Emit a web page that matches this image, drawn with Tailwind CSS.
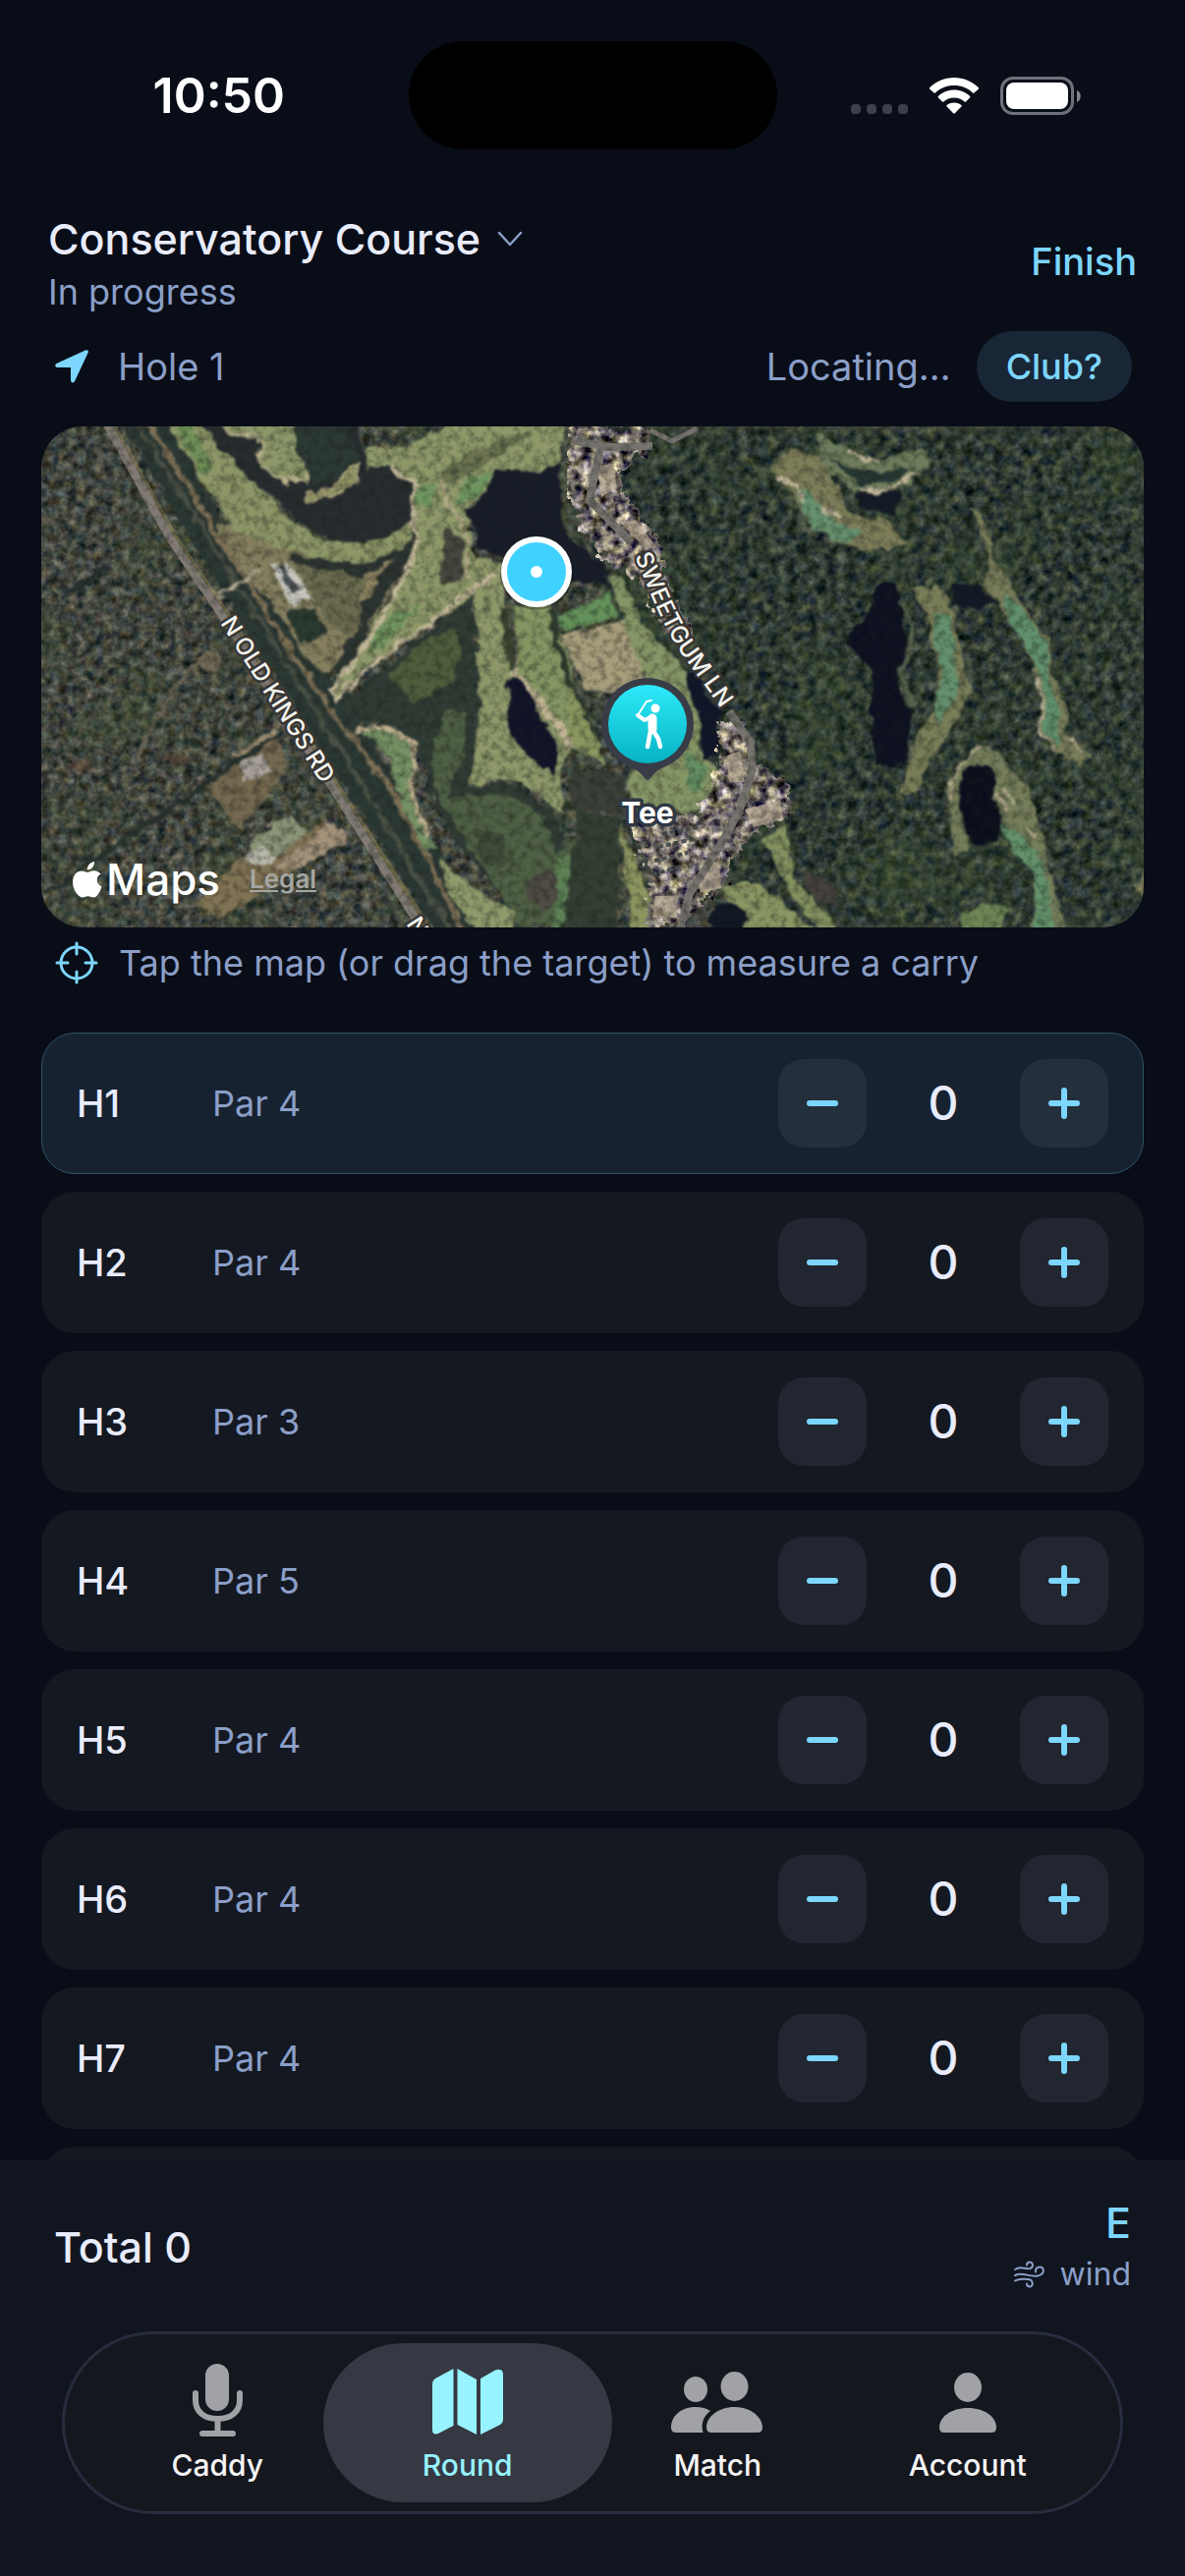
<!DOCTYPE html>
<html lang="en">
<head>
    <meta charset="UTF-8">
    <meta name="viewport" content="width=device-width, initial-scale=1.0">
    <title>Conservatory Course - Round</title>
    <script src="https://cdn.jsdelivr.net/npm/@tailwindcss/browser@4"></script>
</head>
<body class="bg-[#090d17] font-['Inter','Liberation_Sans',sans-serif] text-[#e9ecfc]">
<div class="flex h-screen flex-col overflow-hidden">

    <!-- Status bar -->
    <div class="grid shrink-0 grid-cols-[1fr_375px_1fr] items-center pt-[42px]">
        <div class="pl-[30px] text-center text-[50px] leading-[60px] font-semibold text-white">10:50</div>
        <div class="h-[110px] rounded-full bg-black"></div>
        <div class="flex items-center justify-end gap-[22px] pr-[106px]">
            <svg class="h-10 w-[58px]" viewBox="0 0 58 40" fill="#3d404b">
                <rect x="0" y="29" width="10" height="10" rx="4"/><rect x="16" y="29" width="10" height="10" rx="4"/><rect x="32" y="29" width="10" height="10" rx="4"/><rect x="48" y="29" width="10" height="10" rx="4"/>
            </svg>
            <svg class="h-10 w-[50px]" viewBox="0 0 50 40" fill="#fff">
                <path d="M25 2C15.500 2 6.500 5.800 0 12.200Q-.5 13 .2 13.700L4.600 17.600Q5.300 18 6 17.500C11 12.600 17.500 10 25 10S39 12.600 44 17.500Q44.700 18 45.400 17.600L49.800 13.700Q50.500 13 50 12.200C43.500 5.800 34.500 2 25 2Z"/>
                <path d="M25 14.500C18.500 14.500 13 17 8.800 21Q8.300 21.800 9 22.500L13 26.500Q13.700 27 14.400 26.500C17.300 23.800 20.800 22.500 25 22.500S32.700 23.800 35.600 26.500Q36.300 27 37 26.500L41 22.500Q41.700 21.800 41.200 21C37 17 31.500 14.500 25 14.500Z"/>
                <path d="M25 27.500C21.800 27.500 19.300 28.500 17.500 30.200Q17 30.900 17.600 31.500L24.200 38.300Q25 39 25.800 38.300L32.400 31.500Q33 30.900 32.500 30.200C30.700 28.500 28.200 27.500 25 27.500Z"/>
            </svg>
            <svg class="h-10 w-[82px]" viewBox="0 0 82 40">
                <rect x="1.500" y="2.500" width="72" height="36" rx="11.500" fill="none" stroke="#6f727a" stroke-width="3"/>
                <rect x="6" y="7" width="63" height="27" rx="8" fill="#fff"/>
                <path d="M78 15C83 17 83 25 78 27Z" fill="#85878d"/>
            </svg>
        </div>
    </div>

    <!-- Course header -->
    <header class="flex shrink-0 items-center justify-between px-[49px] pt-[60px]">
        <div>
            <button class="flex items-center gap-[17px] text-[43px] leading-[62px] font-medium">
                Conservatory Course
                <svg class="h-[26px] w-[26px]" viewBox="0 0 26 26" fill="none" stroke="#8b9fc8" stroke-width="2.500" stroke-linecap="round" stroke-linejoin="round"><path d="M2 7l11 12 11-12"/></svg>
            </button>
            <p class="text-[36px] leading-[46px] text-[#8b9fc8]">In progress</p>
        </div>
        <button class="text-[38px] leading-[48px] font-medium text-[#7dd6fd]">Finish</button>
    </header>

    <!-- Current hole -->
    <div class="flex shrink-0 items-center pt-[17px] pr-[54px] pl-[56px] text-[38px] leading-[48px] text-[#8b9fc8]">
        <svg class="mr-[30px] h-[34px] w-[34px]" viewBox="0 0 34 34" fill="#7dd6fd"><path d="M31.500.3L2 13.700C-.8 15 0 18 2.800 18H15.400Q16 18 16 18.700V31C16 33.800 19 34.400 20.200 31.800L33.700 2.700C34.300 1 33 -.3 31.500.3Z"/></svg>
        <span>Hole 1</span>
        <span class="ml-auto">Locating…</span>
        <button class="ml-[26px] rounded-full bg-[#192635] px-[30px] py-3 text-[36px] font-medium text-[#7dd6fd]">Club?</button>
    </div>

    <!-- Satellite map -->
    <div class="relative mx-[42px] mt-[25px] h-[510px] shrink-0 overflow-hidden rounded-[42px]">
        <svg class="absolute inset-0 h-full w-full" viewBox="0 0 1122 510" preserveAspectRatio="xMidYMid slice" role="img" aria-label="Satellite map of hole 1">
            <defs>
                <filter id="canopy" x="0" y="0" width="100%" height="100%" color-interpolation-filters="sRGB">
                    <feTurbulence type="fractalNoise" baseFrequency=".11" numOctaves="5" seed="4"/>
                    <feColorMatrix values=".55 .25 0 0 -.125  .55 .1 0 0 -.035  .45 0 .15 0 -.04  0 0 0 0 1"/>
                    <feComposite in2="SourceAlpha" operator="in"/>
                </filter>
                <filter id="canopyEast" x="0" y="0" width="100%" height="100%" color-interpolation-filters="sRGB">
                    <feTurbulence type="fractalNoise" baseFrequency=".1" numOctaves="5" seed="9"/>
                    <feColorMatrix values=".5 .2 0 0 -.155  .5 .15 0 0 -.085  .4 0 .15 0 -.065  0 0 0 0 1" result="n"/>
                    <feGaussianBlur in="SourceAlpha" stdDeviation="5" result="a"/>
                    <feComposite in="n" in2="a" operator="in"/>
                </filter>
                <filter id="glades" x="0" y="0" width="100%" height="100%" color-interpolation-filters="sRGB">
                    <feTurbulence type="fractalNoise" baseFrequency=".012" numOctaves="3" seed="31"/>
                    <feColorMatrix values="0 0 0 0 .27  0 0 0 0 .36  0 0 0 0 .2  2.400 0 0 0 -1.100"/>
                </filter>
                <filter id="houses" x="0" y="0" width="100%" height="100%" color-interpolation-filters="sRGB">
                    <feTurbulence type="fractalNoise" baseFrequency=".1" numOctaves="4" seed="12" result="t"/>
                    <feColorMatrix values="1.700 .2 0 0 -.44  1.650 .2 0 0 -.45  1.350 0 .3 0 -.37  0 0 0 0 1" result="n"/>
                    <feDisplacementMap in="SourceAlpha" in2="t" scale="24" xChannelSelector="R" yChannelSelector="G" result="s"/>
                    <feComposite in="n" in2="s" operator="in"/>
                </filter>
                <filter id="ragged" x="-5%" y="-5%" width="110%" height="110%" color-interpolation-filters="sRGB">
                    <feTurbulence type="fractalNoise" baseFrequency=".07" numOctaves="3" seed="3"/>
                    <feDisplacementMap in="SourceGraphic" scale="12" xChannelSelector="R" yChannelSelector="G"/>
                    <feGaussianBlur stdDeviation="1"/>
                </filter>
                <filter id="grain" x="0" y="0" width="100%" height="100%" color-interpolation-filters="sRGB">
                    <feTurbulence type="fractalNoise" baseFrequency=".12" numOctaves="4" seed="21"/>
                    <feColorMatrix values="0 0 0 0 .1  0 0 0 0 .12  0 0 0 0 .1  1 0 0 0 -.4"/>
                </filter>
                <linearGradient id="teeFill" x1="0" y1="0" x2="0" y2="1"><stop offset="0" stop-color="#2deafa"/><stop offset="1" stop-color="#06b3c3"/></linearGradient>
                <path id="kingsRd" d="M182 200L318 416"/>
                <path id="kingsRd2" d="M371 506L440 615"/>
                <path id="sweetgumLn" d="M604 132C620 170 630 198 650 229C672 260 694 288 716 326"/>
            </defs>

            <rect width="1122" height="510" fill="#434a40" filter="url(#canopy)"/>
            <path d="M560 0H1122V510H720L640 330L560 130Z" fill="#000" filter="url(#canopyEast)"/>
            <rect width="1122" height="510" filter="url(#glades)" opacity=".45"/>

            <g filter="url(#ragged)">
                <!-- west side -->
                <g transform="translate(-12 -14) scale(.3827)">
                    <path d="M240 20L360 20L520 300L700 560L860 800L1240 1400L1090 1400L860 1030L540 520Z" fill="#2b3834"/>
                    <path d="M290 30L560 470L860 950L1130 1390" fill="none" stroke="#4b5145" stroke-width="14"/>
                    <path d="M500 290L600 330L900 430L990 390L960 480L880 600L790 700L760 690L640 500L540 400Z" fill="#857f5f"/>
                    <path d="M700 380L900 430L930 400L880 600L800 560L740 470Z" fill="#5c5e45" opacity=".6"/>
                    <path d="M680 530L760 520L790 590L720 610Z" fill="#2a3a30"/>
                    <path d="M690 375L870 400L1020 310L1020 370L900 560L880 640L830 700L800 690L880 560L890 440L700 400Z" fill="#2c3431"/>
                    <path d="M890 440L975 385L930 440L880 520Z" fill="#8e8463"/>
                    <path d="M635 405L690 400L745 490L700 515Z" fill="#c6c5bd"/><path d="M660 405L675 400L715 475L700 480Z" fill="#4d5357"/>
                    <path d="M360 20L480 30C540 120 640 250 740 320C820 370 930 350 1020 285L1010 340C950 390 880 410 830 395C740 380 600 340 540 310C480 200 430 140 360 20Z" fill="#8d9667"/>
                    <path d="M380 20L430 30L490 150L450 150Z" fill="#6f9058"/>
                    <path d="M450 20L870 20L900 140L960 140L1020 190L1015 285C960 330 900 350 860 350C780 345 720 300 690 260C600 190 540 140 450 20Z" fill="#272d2f"/>
                    <path d="M500 20L700 20L740 130L740 185L650 175L608 125L618 72L530 55Z" fill="#8d9769" stroke="#b9b18c" stroke-width="8"/>
                    <path d="M700 20L830 30L870 110L840 180L760 185L710 110Z" fill="#2c3934"/>
                    <path d="M735 235Q720 215 770 210L830 185L850 140L870 140L865 190L830 215Z" fill="#8d9263" stroke="#b3a780" stroke-width="6"/>
                    <path d="M900 90L1010 84L1130 20H1420L1410 140L1350 156L1250 148L1200 235L1170 245L1170 310L1180 390L1260 400L1265 560L1290 690L1440 880L1410 960L1420 1070L1290 970L1165 995L1200 800L1185 500L1090 540L1000 610L880 680L820 760L798 745L890 620L910 560L980 460L1025 340L1022 190L960 140L900 150Z" fill="#8e9869"/>
                    <path d="M1100 150L1250 70L1340 50L1200 150L1110 190Z" fill="#6b7350"/>
                    <path d="M1170 170L1230 160L1200 220L1130 240Z" fill="#6f9660"/>
                    <path d="M1100 310L1150 330L1155 440L1095 460Z" fill="#46473e"/>
                    <path d="M920 560L1040 510L960 600L900 650Z" fill="#71955f"/>
                    <path d="M1020 190L1080 190L1070 250L1030 240Z" fill="#6f9660"/>
                    <path d="M1285 510L1380 510L1430 640L1470 830L1540 940L1440 890L1300 690Z" fill="#869663"/>
                    <path d="M960 140L1022 185L1020 290L1030 350L980 470L910 590L805 745L815 765L870 700L1000 610L1090 540L1180 465L1250 425" fill="none" stroke="#c0b596" stroke-width="13"/>
                    <path d="M1100 170L1110 240L1160 310L1165 450" fill="none" stroke="#b3a786" stroke-width="8"/>
                    <path d="M1285 680L1420 850L1440 890" fill="none" stroke="#c2b494" stroke-width="24"/>
                    <path d="M1240 148L1350 156L1412 130L1412 250L1440 350L1540 415L1520 455L1460 455L1400 390L1250 380L1205 365L1160 260L1205 235Z" fill="#171c29"/>
                    <path d="M820 770L950 680L1180 480L1195 800L1165 1000L1290 985L1410 1080L1440 1300L1300 1330L1120 1130L1020 870L940 820L860 820Z" fill="#2f3b34"/>
                    <path d="M1260 520L1280 680" fill="none" stroke="#38422f" stroke-width="20"/>
                    <path d="M1270 710Q1300 690 1320 730L1370 820L1405 895L1395 962L1340 920L1278 865Z" fill="#101328"/>
                    <path d="M950 700L1060 600L1130 570L1150 640L1120 720L1020 770Z" fill="#505e3c"/>
                    <path d="M1100 790L1165 800L1150 940L1110 1020L1180 1020L1280 1010L1370 1080L1400 1180L1450 1130L1490 1200L1480 1380L1300 1360L1190 1180L1100 1050L1065 930Z" fill="#4f6044"/>
                    <path d="M1180 1110L1260 1120L1270 1210L1210 1200Z" fill="#3e4b39"/>
                    <ellipse cx="1370" cy="1270" rx="42" ry="52" fill="#4f4c44"/>
                    <path d="M1400 1190L1470 1180L1480 1380L1400 1380Z" fill="#5d8155"/>
                    <path d="M880 850L940 832L1022 880L1018 1020L1085 1160L1045 1160L985 1040L960 920Z" fill="#769265"/>
                    <path d="M860 845L940 830L1022 880L1015 1020L1060 1120" fill="none" stroke="#bfb08f" stroke-width="12"/>
                    <path d="M1095 1180L1160 1250L1290 1330L1290 1390L1190 1390L1110 1270Z" fill="#8f9a6b"/>
                    <path d="M1400 545L1545 475L1560 545L1415 580Z" fill="#649159"/>
                    <path d="M1410 590L1600 550L1640 740L1480 740Z" fill="#a89e7c"/>
                    <path d="M1385 530L1430 700L1500 860" fill="none" stroke="#2d3a2e" stroke-width="16"/>
                    <!-- homesteads below the road -->
                    <path d="M470 990L650 850L690 940L560 1110Z" fill="#75694f"/>
                    <path d="M560 930L620 900L640 950L570 985Z" fill="#a8a19a"/>
                    <path d="M440 1310L560 1180L790 1090L850 1130L620 1270L500 1350Z" fill="#807254"/>
                    <path d="M580 1150L690 1070L740 1110L640 1200Z" fill="#8c9577"/>
                    <path d="M560 1180L620 1150L660 1190L600 1210Z" fill="#b9b8ac"/>
                    <path d="M640 1220L800 1090L850 1130L720 1210Z" fill="#a3917a"/>
                    <path d="M40 1280L340 1080L660 850" fill="none" stroke="#27322e" stroke-width="14"/>
                    <path d="M540 920L660 840" stroke="#9b8c70" stroke-width="12"/>
                    <path d="M270 950L380 740L470 640" fill="none" stroke="#6b6455" stroke-width="10"/>
                    <ellipse cx="480" cy="660" rx="34" ry="28" fill="#756b58"/>
                    <path d="M90 910L200 760" stroke="#57574b" stroke-width="10"/>
                    <path d="M100 480L210 410" stroke="#252f2f" stroke-width="14"/>
                    <path d="M100 950L160 940M360 910L420 930" stroke="#6a513d" stroke-width="30" opacity=".6"/>
                    <!-- rail line -->
                    <path d="M320 30L480 290L610 500L800 790L960 1000L1150 1370" fill="none" stroke="#7d7056" stroke-width="15"/>
                    <path d="M490 490L620 420" stroke="#b3aa92" stroke-width="10"/>
                </g>
                <!-- east side -->
                <g transform="translate(538 -14) scale(.3992 .3827)">
                    <path d="M100 430L130 430L190 560L290 690L330 800L330 900L390 960L340 1060L150 1060L150 960L250 900L200 720L150 600Z" fill="#869566"/>
                    <path d="M290 900L350 940L340 1000L310 1010Z" fill="#648f62"/>
                    <path d="M0 720L60 860L100 940L40 900L0 860Z" fill="#8b975f"/>
                    <path d="M130 1090L170 1200L210 1300L200 1390L160 1390Z" fill="#8b955f"/>
                    <path d="M20 1060L130 1070L120 1390L-20 1390Z" fill="#343f33"/>
                    <path d="M0 940L140 960L140 1060L0 1060Z" fill="#3c4039"/>
                    <path d="M0 330L90 410L100 455L0 450Z" fill="#171c29"/>
                    <path d="M290 690L330 680L340 740L385 800L380 915L340 920L330 790Z" fill="#10152a"/>
                    <path d="M390 1260L480 1250L640 1390H440Z" fill="#8b9663"/>
                    <path d="M490 1130L550 1100L570 1230L700 1390L640 1390L560 1270Z" fill="#849260"/>
                    <ellipse cx="405" cy="1350" rx="48" ry="46" fill="#101723"/>
                    <path d="M510 150L570 90L640 120L680 190L720 270L810 290L860 350L770 370L700 350L620 310L580 240Z" fill="#7d7d59"/>
                    <path d="M570 200L620 220L680 290L740 320L710 350L620 310Z" fill="#66906e"/>
                    <path d="M630 50L700 90L790 130L890 90L925 130L870 190L800 215L730 205L640 140Z" fill="#6f7d5c"/>
                    <path d="M660 120L740 155L870 150L850 175L740 195Z" fill="#263632"/>
                    <path d="M520 175L570 190L600 240M640 255L690 280M700 100L790 130M740 205L800 210L890 165" fill="none" stroke="#c2b79a" stroke-width="11"/>
                    <path d="M725 215L850 210L820 275L740 255Z" fill="#131926"/>
                    <path d="M780 465Q830 430 838 480L860 650L835 720L872 800L850 935L785 940L765 780L775 690L705 610L720 570L760 550Z" fill="#0c1020"/>
                    <path d="M845 500L875 570L845 700L880 790" fill="none" stroke="#55604a" stroke-width="14"/>
                    <path d="M870 460L940 455L970 500L1000 640L1020 740L960 860L900 960L880 1015L845 1010L870 900L930 780L940 680L910 540Z" fill="#7a7e58"/>
                    <path d="M920 540L965 530L985 650L985 760L940 830L925 780L950 700Z" fill="#64906d"/>
                    <path d="M980 460L1040 450L1085 505L1040 525L975 510Z" fill="#111826"/>
                    <path d="M1020 250L1060 290L1085 400L1130 460L1190 570L1220 600L1230 710L1270 790L1265 860L1330 910L1300 935L1240 900L1195 850L1200 760L1180 660L1130 570L1060 460L1075 400Z" fill="#797c59"/>
                    <path d="M1100 480L1150 520L1215 610L1225 720L1250 800L1250 890L1205 850L1210 740L1180 650L1120 560Z" fill="#61906d"/>
                    <path d="M1190 700L1205 770L1195 850L1240 900M1270 870L1300 900" fill="none" stroke="#b5ad93" stroke-width="8"/>
                    <path d="M960 1010L990 930L1050 880L1090 900L1150 980L1190 1070L1220 1190L1265 1390L1180 1390L1180 1220L1120 1100L1080 1040L990 1010L1010 1110L1020 1170L980 1180Z" fill="#757d5a"/>
                    <path d="M1100 1090L1160 1130L1210 1200L1240 1390L1185 1390L1180 1220L1140 1180Z" fill="#64926b"/>
                    <path d="M965 1030L990 940L1050 885M1100 1000L1130 1040M1170 1110L1190 1130M1080 1010L1120 1060" fill="none" stroke="#b3aa8c" stroke-width="9"/>
                    <path d="M1005 960Q1050 920 1085 950L1080 1020L1102 1070L1095 1140L1050 1152L1010 1120L995 1030Z" fill="#0a0e1c"/>
                    <path d="M995 1330L1060 1300L1110 1320L1100 1390L1000 1390Z" fill="#6f8655"/>
                    <path d="M1465 1210L1440 1260L1470 1310Z" fill="#8a8b62"/>
                    <path d="M590 1210L670 1260L680 1320L620 1290Z" fill="#45423d"/>
                </g>
            </g>

            <!-- neighbourhood -->
            <path d="M540 0H618L618 20L590 50L600 80L628 115L640 165L668 215L655 225L640 215L610 160L575 135L545 95L535 50Z" filter="url(#houses)"/>
            <path d="M690 300L716 300L726 340L765 365L762 395L730 410L712 430L695 465L650 510H615L622 460L600 400L668 395L690 350Z" filter="url(#houses)"/>
            <g fill="#bcae97" opacity=".75">
                <path d="M566 40L582 38L586 62L570 72Z"/><path d="M590 98L605 95L628 125L612 122Z"/><path d="M698 335L712 330L716 362L700 362Z"/><path d="M716 390L752 380L755 400L725 408Z"/><path d="M672 440L690 445L692 470L670 475Z"/><path d="M625 478L648 478L646 500L622 500Z"/>
            </g>
            <path d="M632 415L668 408M628 428L664 420M624 442L658 434M622 456L652 448" stroke="#4a504e" stroke-width="4" stroke-dasharray="5 3"/>
            <g fill="none" stroke="#77746f" stroke-width="8">
                <path d="M540 14L575 21L622 20M569 21L558 75L600 118"/>
                <path d="M700 290L722 322L724 350L710 392L690 428L660 475L650 512"/>
                <path d="M620 4L642 15L668 2" stroke-width="5"/>
            </g>

            <path d="M68 -4L132 112L182 186L309 384L384 500L396 520" fill="none" stroke="#a49263" stroke-width="12" opacity=".45"/>
            <path d="M66 -4L130 112L180 186L307 384L380 500L392 520" fill="none" stroke="#827b75" stroke-width="8"/>
            <rect width="1122" height="510" filter="url(#grain)"/>

            <g class="fill-[#f4f4ef] stroke-[#383633] text-[24px] font-medium" stroke-width="5" stroke-linejoin="round" paint-order="stroke">
                <text><textPath href="#kingsRd">N OLD KINGS RD</textPath></text>
                <text><textPath href="#kingsRd2">N</textPath></text>
                <text><textPath href="#sweetgumLn">SWEETGUM LN</textPath></text>
            </g>

            <!-- target -->
            <circle cx="504" cy="150" r="37" fill="#000" opacity=".25"/>
            <circle cx="504" cy="148" r="33" fill="#3fd2ff" stroke="#fff" stroke-width="6"/>
            <circle cx="504" cy="148" r="6" fill="#fff"/>

            <!-- tee pin -->
            <path d="M617 256a47 47 0 0 1 20 89.500Q625 350 620 358Q617 362 614 358Q609 350 597 345.500A47 47 0 0 1 617 256Z" fill="#383c47"/>
            <circle cx="617" cy="303" r="40" fill="url(#teeFill)"/>
            <circle cx="625" cy="287" r="4.500" fill="#fff"/>
            <g fill="none" stroke="#fff" stroke-linecap="round" stroke-linejoin="round">
                <path d="M621 279L616 280L607 294" stroke-width="2"/>
                <path d="M607 294L614 299L622 295" stroke-width="4"/>
                <path d="M622 297L622 308" stroke-width="9"/>
                <path d="M620 310L617 326M623 310L628 318L630 326" stroke-width="4.500"/>
            </g>
            <text x="617" y="404" text-anchor="middle" class="fill-white stroke-[#2f3743] text-[30px] font-bold" stroke-width="7" stroke-linejoin="round" paint-order="stroke">Tee</text>
        </svg>
        <div class="absolute bottom-[21px] left-[32px] flex items-center">
            <svg class="mr-[4px] h-[37px] w-[30px]" viewBox="0 0 30 37" fill="#fff">
                <path d="M22 0C22.300 4.500 18.500 8.600 14.800 8.500C14.400 4.300 18.200.4 22 0Z"/>
                <path d="M15.200 10.800C16.700 10.800 18.600 9.200 21.700 9.200C24.500 9.200 27 10.500 28.500 12.600C23 15.800 23.800 23.300 29.500 25.500C28.300 29.500 25.200 36.500 21.300 36.500C19.200 36.500 18.200 35.200 15.600 35.200C12.900 35.200 11.700 36.500 9.800 36.500C5.500 36.500 0 28.500 0 20.600C0 13.300 4.500 9.400 8.900 9.400C11.700 9.400 13.700 10.800 15.200 10.800Z"/>
            </svg>
            <span class="text-[44px] leading-[56px] font-medium text-white">Maps</span>
            <a href="#" class="ml-[30px] text-[26px] leading-[32px] font-semibold text-[#a5a6a2] underline">Legal</a>
        </div>
    </div>

    <div class="flex shrink-0 items-center gap-[21px] px-[56px] pt-[13px]">
        <svg class="h-[44px] w-[44px]" viewBox="0 0 44 44" fill="none" stroke="#7dd6fd" stroke-width="3" stroke-linecap="round"><circle cx="22" cy="22" r="16"/><path d="M22 2v11M22 31v11M2 22h11M31 22h11"/></svg>
        <p class="text-[36px] leading-[46px] text-[#8b9fc8]">Tap the map (or drag the target) to measure a carry</p>
    </div>

    <!-- Scorecard -->
    <main class="min-h-0 flex-1 overflow-hidden px-[42px] pt-[48px]">
        <ul id="holes" class="flex flex-col gap-[18px]"></ul>
    </main>

    <!-- Totals and tabs -->
    <footer class="shrink-0 bg-[#10151f] px-[63px] pt-[36px] pb-[63px]">
        <div class="-mx-[8px] mb-[33px] flex items-center justify-between">
            <p class="text-[43px] leading-[56px] font-medium">Total <output>0</output></p>
            <div class="text-right">
                <p class="text-[43px] leading-[56px] font-medium text-[#7dd6fd]">E</p>
                <p class="flex items-center gap-[16px] text-[32px] leading-[50px] text-[#8b9fc8]">
                    <svg class="h-[28px] w-[31px]" viewBox="0 0 31 28" fill="none" stroke="#8b9fc8" stroke-width="2" stroke-linecap="round"><path d="M1 9C7 5 11 9 16 8C20 7 20 1 15.500 1.500Q13 2 13 4.500M1 15C9 11 15 17 24 15.500C32 14 31 6 26 6.500Q21.500 7 22 11.500M1 20.500C6 17.500 10 19 14 19C20 19 20 27 15.500 26.500Q13 26 13 23.500"/></svg>
                    wind
                </p>
            </div>
        </div>

        <nav class="grid grid-cols-4 rounded-full border-[3px] border-[#272d3e] bg-[#15171f] px-[28px] py-[9px] text-[30px] leading-[36px] font-medium text-[#f5f5f5]">
            <a href="#" class="flex flex-col items-center gap-[9px] pt-[18px] pb-[20px]">
                <svg class="h-[79px] w-[51px]" viewBox="0 0 51 79" fill="none" stroke="#a1a2a6" stroke-width="6" stroke-linecap="round"><rect x="13" y="3" width="24" height="48" rx="12" fill="#a1a2a6" stroke="none"/><path d="M3 33V40C3 52 12 59 25.500 59S48 52 48 40V33M25.500 59V73M10 74H41"/></svg>
                Caddy
            </a>
            <a href="#" aria-current="page" class="-mx-[20px] flex flex-col items-center gap-[9px] rounded-full bg-[#363843] pt-[18px] pb-[20px] text-[#96f3ff]">
                <svg class="h-[79px] w-[72px]" viewBox="0 0 72 79" fill="#96f3ff"><path d="M0 24Q0 20 3 18L21.500 8V66L6 74Q0 76 0 70ZM25.500 8L45 19V75L25.500 65ZM49 18L64 9.500Q72 7 72 14V60Q72 63 69 65L49 75Z"/></svg>
                Round
            </a>
            <a href="#" class="flex flex-col items-center gap-[9px] pt-[18px] pb-[20px]">
                <svg class="h-[79px] w-[94px]" viewBox="0 0 94 79" fill="#a1a2a6"><ellipse cx="25" cy="29" rx="12" ry="13"/><ellipse cx="64.500" cy="26" rx="14" ry="15"/><path d="M64.500 47C81 47 93 57 93 68Q93 73 88 73H41Q36 73 36 68C36 57 48 47 64.500 47ZM25 47C31 47 36 48.500 40 51C33 56 30 64 32.500 73H5Q0 73 0 68C0 57 9 47 25 47Z"/></svg>
                Match
            </a>
            <a href="#" class="flex flex-col items-center gap-[9px] pt-[18px] pb-[20px]">
                <svg class="h-[79px] w-[58px]" viewBox="0 0 58 79" fill="#a1a2a6"><ellipse cx="29" cy="27" rx="14" ry="15"/><path d="M29 48C46 48 58 57 58 68Q58 73 53 73H5Q0 73 0 68C0 57 12 48 29 48Z"/></svg>
                Account
            </a>
        </nav>
    </footer>
</div>

<script>
    const pars = [4, 4, 3, 5, 4, 4, 4, 4];
    const current = 1;

    document.getElementById('holes').innerHTML = pars.map((par, i) => {
        const hole = i + 1;
        const row = hole === current ? 'border-[#2f5467] bg-[#172231]' : 'border-[#151922] bg-[#141821]';
        const step = hole === current ? 'bg-[#242f3c]' : 'bg-[#222630]';
        return `
        <li class="flex h-[144px] shrink-0 items-center rounded-[34px] border px-[35px] ${row}">
            <span class="w-[138px] text-[38px] leading-[48px] font-medium">H${hole}</span>
            <span class="text-[36px] leading-[46px] text-[#8b9fc8]">Par ${par}</span>
            <button data-step="-1" aria-label="Remove stroke on hole ${hole}" class="ml-auto grid h-[90px] w-[90px] place-items-center rounded-[26px] ${step}">
                <svg class="h-10 w-10" viewBox="0 0 40 40" stroke="#7dd6fd" stroke-width="6" stroke-linecap="round"><path d="M7 20h26"/></svg>
            </button>
            <output class="w-[156px] text-center text-[48px] leading-[56px] font-medium">0</output>
            <button data-step="1" aria-label="Add stroke on hole ${hole}" class="grid h-[90px] w-[90px] place-items-center rounded-[26px] ${step}">
                <svg class="h-10 w-10" viewBox="0 0 40 40" stroke="#7dd6fd" stroke-width="6" stroke-linecap="round"><path d="M7 20h26M20 7v26"/></svg>
            </button>
        </li>`;
    }).join('');

    document.getElementById('holes').addEventListener('click', (e) => {
        const btn = e.target.closest('button');
        if (!btn) return;
        const out = btn.parentElement.querySelector('output');
        out.value = Math.max(0, Number(out.value) + Number(btn.dataset.step));
        const scores = [...document.querySelectorAll('#holes output')];
        document.querySelector('footer output').value = scores.reduce((sum, o) => sum + Number(o.value), 0);
    });
</script>
</body>
</html>
